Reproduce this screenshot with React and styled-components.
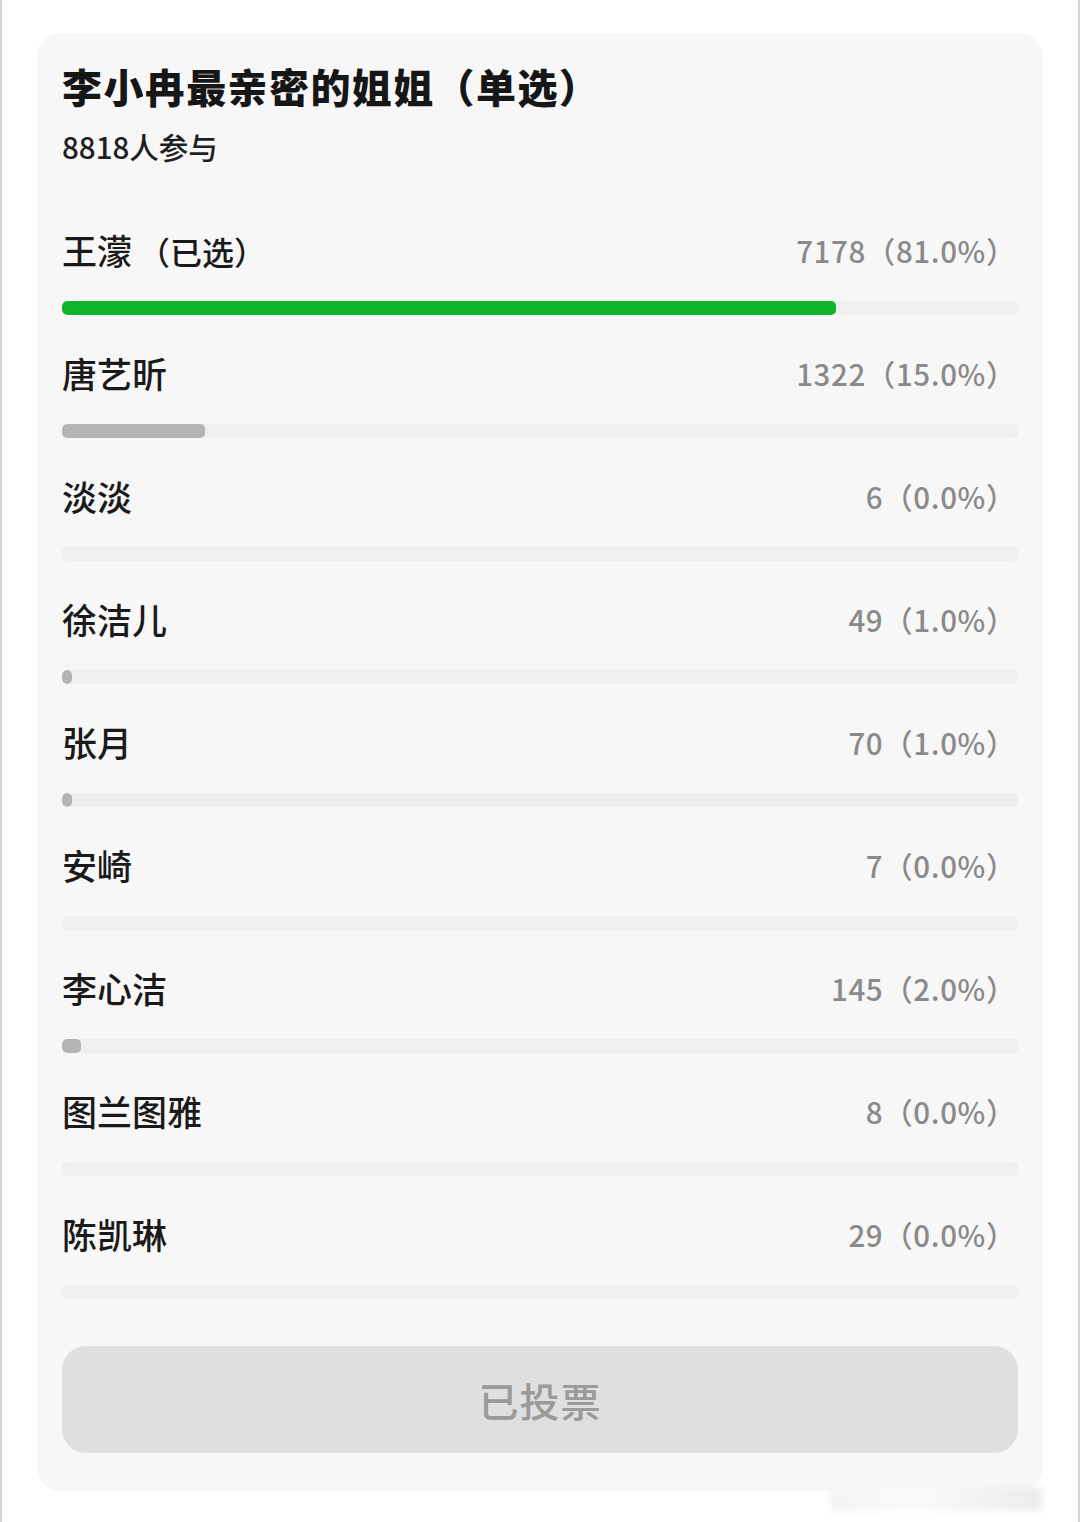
import styled, { createGlobalStyle } from "styled-components";

const GlobalStyle = createGlobalStyle`
  html, body {
    margin: 0;
    padding: 0;
    background: #ffffff;
  }
  body {
    font-family: "Noto Sans CJK SC", "Noto Sans", sans-serif;
  }
`;

const options = [
  { name: "王濛", picked: true, count: 7178, pct: 81.0 },
  { name: "唐艺昕", count: 1322, pct: 15.0 },
  { name: "淡淡", count: 6, pct: 0.0 },
  { name: "徐洁儿", count: 49, pct: 1.0 },
  { name: "张月", count: 70, pct: 1.0 },
  { name: "安崎", count: 7, pct: 0.0 },
  { name: "李心洁", count: 145, pct: 2.0 },
  { name: "图兰图雅", count: 8, pct: 0.0 },
  { name: "陈凯琳", count: 29, pct: 0.0 },
];

function App() {
  return (
    <>
      <GlobalStyle />
      <Page>
        <Card>
          <Title>李小冉最亲密的姐姐（单选）</Title>
          <Count>8818人参与</Count>
          <List>
            {options.map((o) => (
              <Row key={o.name}>
                <RowHead>
                  <Name>
                    {o.name}
                    {o.picked && <Picked>（已选）</Picked>}
                  </Name>
                  <Votes>
                    {o.count}（{o.pct.toFixed(1)}%）
                  </Votes>
                </RowHead>
                <Track>
                  {o.pct > 0 && (
                    <Fill $green={o.picked} style={{ width: `${o.pct}%` }} />
                  )}
                </Track>
              </Row>
            ))}
          </List>
          <VoteButton disabled>已投票</VoteButton>
        </Card>
        <Watermark />
      </Page>
    </>
  );
}

export default App;

const Page = styled.div`
  position: relative;
  min-height: 1522px;
  box-sizing: border-box;
  padding: 33px 37px 32px;
  border-left: 2px solid #d4d4d4;
  border-right: 2px solid #d4d4d4;
`;

const Card = styled.div`
  background: #f7f7f7;
  border-radius: 24px;
  padding: 29px 25px 38px;
  margin-left: -2px;
  margin-right: -2px;
`;

const Title = styled.div`
  font-size: 40px;
  font-weight: 900;
  line-height: 48px;
  color: #161616;
  letter-spacing: 1.4px;
`;

const Count = styled.div`
  margin-top: 16px;
  font-size: 29.5px;
  line-height: 40px;
  color: #1f1f1f;
  font-weight: 500;
`;

const List = styled.div`
  margin-top: 59px;
  display: flex;
  flex-direction: column;
`;

const Row = styled.div`
  margin-bottom: 33px;
`;

const RowHead = styled.div`
  display: flex;
  justify-content: space-between;
  align-items: center;
  height: 50px;
  padding-right: 2px;
  padding-bottom: 6px;
  margin-bottom: 20px;
`;

const Name = styled.div`
  font-size: 35px;
  font-weight: 500;
  color: #1a1a1a;
  line-height: 50px;
`;

const Picked = styled.span`
  margin-left: 6px;
  font-size: 32px;
`;

const Votes = styled.div`
  font-size: 29.5px;
  font-weight: 500;
  color: #8a8a8a;
  line-height: 50px;
  letter-spacing: 0.6px;
`;

const Track = styled.div`
  height: 14px;
  background: #efefef;
  border-radius: 5px;
  overflow: hidden;
`;

const Fill = styled.div`
  height: 100%;
  min-width: 10px;
  border-radius: 5px;
  background: ${(p) => (p.$green ? "#0db52e" : "#b4b4b4")};
`;

const VoteButton = styled.button`
  display: block;
  width: 100%;
  height: 107px;
  margin-top: 14px;
  border: none;
  border-radius: 24px;
  background: #dfdfdf;
  color: #9a9a9a;
  font-family: "Noto Sans CJK SC", sans-serif;
  font-size: 40px;
  font-weight: 500;
  letter-spacing: 1px;
`;

const Watermark = styled.div`
  position: absolute;
  right: 36px;
  bottom: 12px;
  width: 212px;
  height: 24px;
  background: linear-gradient(90deg, #f4f4f4, #fafafa 40%, #ececec);
  filter: blur(3px);
`;
